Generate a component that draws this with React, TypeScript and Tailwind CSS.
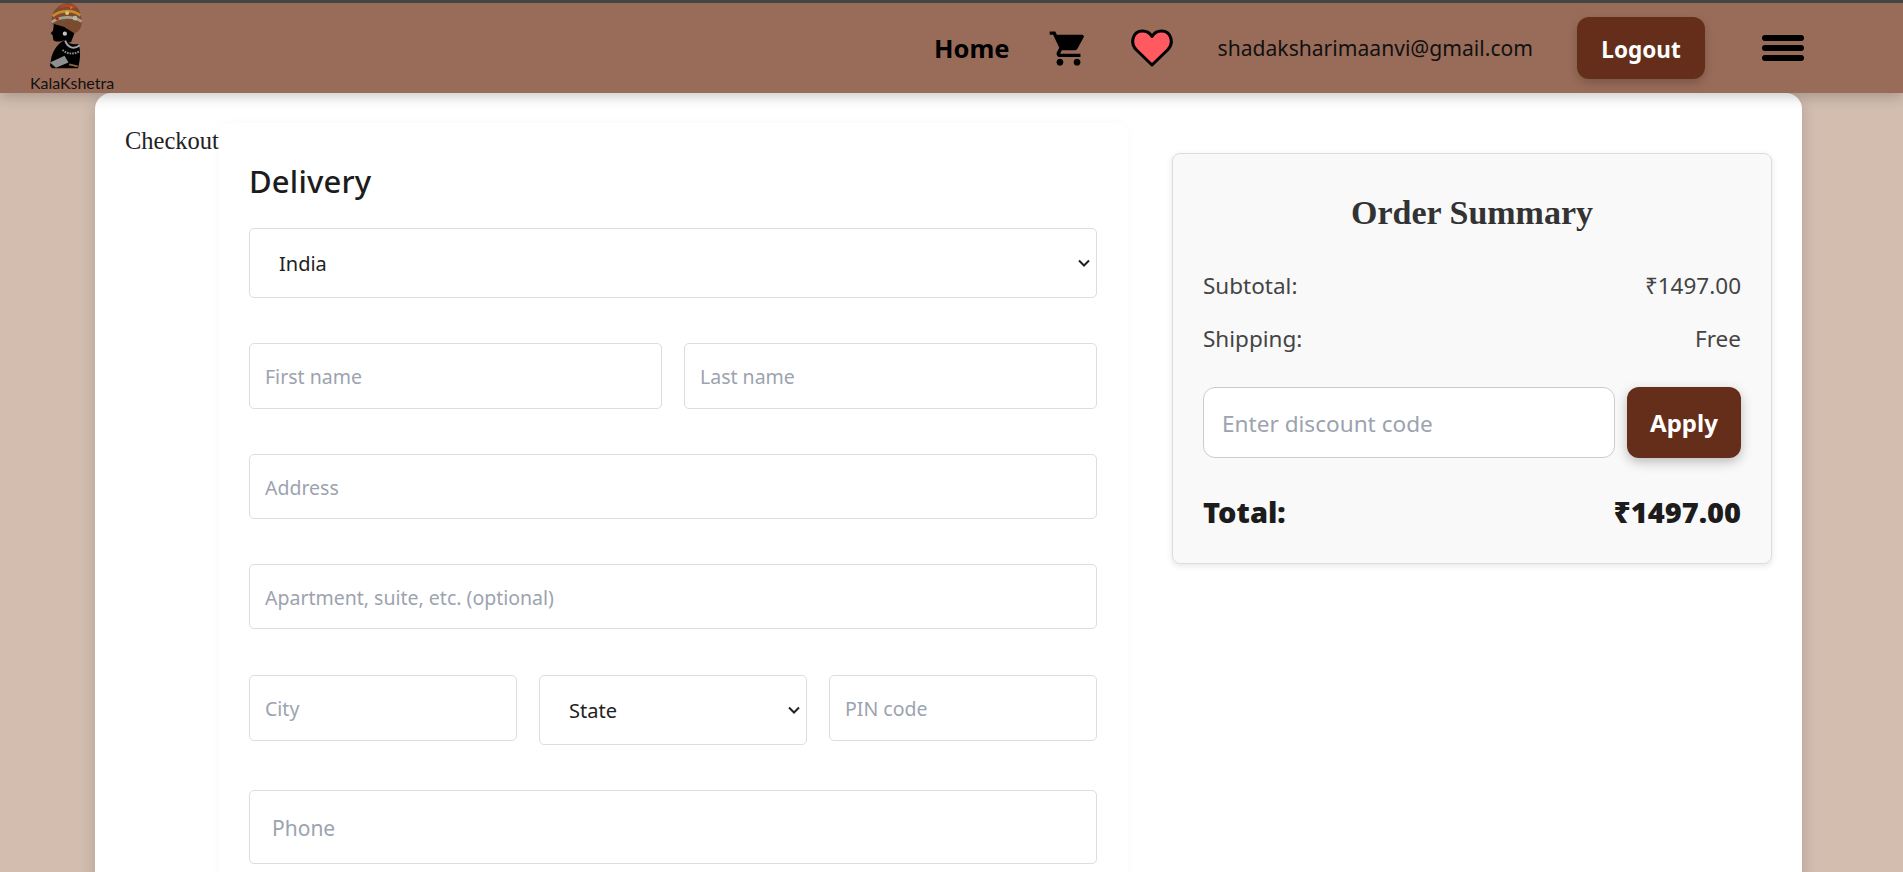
import { MdShoppingCart } from 'react-icons/md'

const inputClass =
  'w-full border border-[#dddddd] rounded-[5px] bg-white text-[19.5px] text-[#222] placeholder:text-[#9ca3af] outline-none'

function Chevron() {
  return (
    <svg width="12" height="8" viewBox="0 0 12 8" className="absolute right-[7px] top-1/2 -translate-y-1/2 pointer-events-none">
      <path d="M1 1.5 L6 6.5 L11 1.5" fill="none" stroke="#222" strokeWidth="2" />
    </svg>
  )
}

function SelectBox({ label, className }: { label: string; className: string }) {
  return (
    <div className={`relative w-full ${className}`}>
      <select
        className="appearance-none w-full h-full border border-[#dddddd] rounded-[5px] bg-white pl-[29px] pr-[28px] pt-[2px] text-[20px] text-[#222] outline-none"
        defaultValue={label}
      >
        <option>{label}</option>
      </select>
      <Chevron />
    </div>
  )
}

function Logo() {
  return (
    <div className="self-start w-[84px] ml-[30px] flex flex-col items-center">
      <svg width="33" height="66" viewBox="0 0 100 200" className="mr-[12px]">
        <path d="M6 62 C0 25 30 0 55 0 C82 0 98 30 96 62 C95 76 88 86 75 92 L40 72 L10 68 Z" fill="#7a4b2c" />
        <path d="M8 40 C30 22 70 18 92 38" stroke="#c98a2e" strokeWidth="8" fill="none" />
        <path d="M5 58 C30 40 70 38 96 56" stroke="#a8a08c" strokeWidth="8" fill="none" />
        <path d="M30 12 C45 6 65 6 78 14" stroke="#b5452a" strokeWidth="8" fill="none" />
        <circle cx="22" cy="48" r="5" fill="#b3261e" />
        <circle cx="52" cy="30" r="6" fill="#d9c27a" />
        <circle cx="76" cy="46" r="7" fill="#b8b8b0" />
        <circle cx="42" cy="52" r="4" fill="#3f6d73" />
        <circle cx="64" cy="14" r="4" fill="#d96c2c" />
        <path d="M12 64 L9 84 L2 92 L8 98 L10 112 C16 120 34 117 42 113 L50 122 L64 118 L74 92 L42 72 Z" fill="#000" />
        <path d="M42 114 C22 124 6 150 3 172 L0 190 L6 198 L85 198 C92 172 94 142 86 124 C72 128 56 122 42 114 Z" fill="#000" />
        <path d="M46 114 C54 136 72 142 90 128" stroke="#a3a3a3" strokeWidth="6" fill="none" />
        <path d="M38 142 C52 156 74 156 90 146" stroke="#8b8b8b" strokeWidth="6" strokeDasharray="5 3" fill="none" />
        <path d="M0 180 L44 160 L56 180 L18 196 Z" fill="#8f8f8f" />
        <path d="M58 186 L84 192" stroke="#8a6a3a" strokeWidth="5" />
        <circle cx="45" cy="93" r="6.5" fill="#c4c4c4" />
      </svg>
      <span className="font-['Lato',sans-serif] text-[16px] leading-[12px] text-[#111] mt-[8px] whitespace-nowrap">KalaKshetra</span>
    </div>
  )
}

function Navbar() {
  return (
    <nav className="h-[93px] border-t-[3px] border-[#444] bg-[#996c59] flex items-center shadow-[0_4px_12px_rgba(0,0,0,0.2)] relative z-10">
      <Logo />
      <div className="ml-auto flex items-center mr-[99px]">
        <a className="text-[25.5px] font-bold text-black pt-[1px]">Home</a>
        <MdShoppingCart className="ml-[38px] text-[41px] text-black" />
        <svg width="42" height="38" viewBox="0 0 42 38" className="ml-[42px]">
          <path
            d="M21 36 L5 20.5 C-1 14.5 1.5 2 11.5 2 C15.5 2 19 4 21 7.5 C23 4 26.5 2 30.5 2 C40.5 2 43 14.5 37 20.5 Z"
            fill="#ff5a5f"
            stroke="#000"
            strokeWidth="3"
            strokeLinejoin="round"
          />
        </svg>
        <span className="ml-[45px] text-[21.1px] text-[#111]">shadaksharimaanvi@gmail.com</span>
        <button className="ml-[44px] w-[128px] h-[62px] pt-[3px] rounded-[12px] bg-[#652e1a] text-white text-[22.5px] font-bold shadow-[0_4px_10px_rgba(0,0,0,0.2)]">
          Logout
        </button>
        <div className="ml-[57px] w-[42px] flex flex-col gap-[4px]">
          <div className="h-[6px] bg-black rounded-full" />
          <div className="h-[6px] bg-black rounded-full" />
          <div className="h-[6px] bg-black rounded-full" />
        </div>
      </div>
    </nav>
  )
}

function DeliveryForm() {
  return (
    <div className="w-[909px] shrink-0 pl-[30px] pr-[31px] pt-[36px] rounded-[10px] shadow-[0_0_10px_rgba(0,0,0,0.03)]">
      <h2 className="text-[31px] leading-[44px] font-medium text-[#1c1c1c] mb-[25px] tracking-[0.2px]">Delivery</h2>
      <SelectBox label="India" className="h-[70px] mb-[45px]" />
      <div className="flex gap-[22px] mb-[45px]">
        <input className={`${inputClass} h-[66px] px-[15px]`} placeholder="First name" />
        <input className={`${inputClass} h-[66px] px-[15px]`} placeholder="Last name" />
      </div>
      <input className={`${inputClass} h-[65px] px-[15px] pt-[1px] mb-[45px] block`} placeholder="Address" />
      <input className={`${inputClass} h-[65px] px-[15px] pt-[1px] mb-[46px] block`} placeholder="Apartment, suite, etc. (optional)" />
      <div className="grid grid-cols-3 items-start gap-[22px] mb-[45px]">
        <input className={`${inputClass} h-[66px] px-[15px]`} placeholder="City" />
        <SelectBox label="State" className="h-[70px]" />
        <input className={`${inputClass} h-[66px] px-[15px]`} placeholder="PIN code" />
      </div>
      <input className={`${inputClass} h-[74px] px-[22px] pt-[1px] !text-[21px] block`} placeholder="Phone" />
    </div>
  )
}

function OrderSummary() {
  return (
    <aside className="w-[600px] ml-auto mt-[30px] h-[411px] bg-[#f9f9f9] border border-[#dddddd] rounded-[8px] shadow-[0_2px_6px_rgba(0,0,0,0.1)] px-[30px] text-[#333]">
      <h3 className="font-['Liberation_Serif',serif] text-[34px] font-bold text-center mt-[35px] leading-[48px] mb-[34px]">
        Order Summary
      </h3>
      <div className="flex justify-between text-[22.5px] leading-[30px] text-[#444] mb-[23px]">
        <span>Subtotal:</span>
        <span>₹1497.00</span>
      </div>
      <div className="flex justify-between text-[22.5px] leading-[30px] text-[#444] mb-[33px]">
        <span>Shipping:</span>
        <span>Free</span>
      </div>
      <div className="flex gap-[12px] mb-[36px]">
        <input
          className="w-[412px] h-[71px] pt-[1px] border border-[#cccccc] rounded-[12px] bg-white px-[18px] text-[22.6px] placeholder:text-[#9ca3af] outline-none"
          placeholder="Enter discount code"
        />
        <button className="flex-1 h-[71px] rounded-[12px] bg-[#652e1a] text-white text-[24px] font-bold shadow-[0_4px_12px_rgba(0,0,0,0.25)]">
          Apply
        </button>
      </div>
      <div className="flex justify-between text-[29px] font-black text-[#1c1c1c] leading-[36px]">
        <span>Total:</span>
        <span>₹1497.00</span>
      </div>
    </aside>
  )
}

export default function App() {
  return (
    <div className="h-[872px] overflow-hidden bg-[#d2bdaf] font-['Noto_Sans','Open_Sans',sans-serif]">
      <Navbar />
      <main className="ml-[95px] w-[1707px] h-[900px] bg-white rounded-t-[16px] shadow-[0_4px_16px_rgba(0,0,0,0.15)] px-[30px] pt-[30px] flex">
        <div className="font-['Liberation_Serif',serif] text-[24.5px] leading-[36px] text-[#222] shrink-0 w-[94px] whitespace-nowrap">Checkout</div>
        <DeliveryForm />
        <OrderSummary />
      </main>
    </div>
  )
}
